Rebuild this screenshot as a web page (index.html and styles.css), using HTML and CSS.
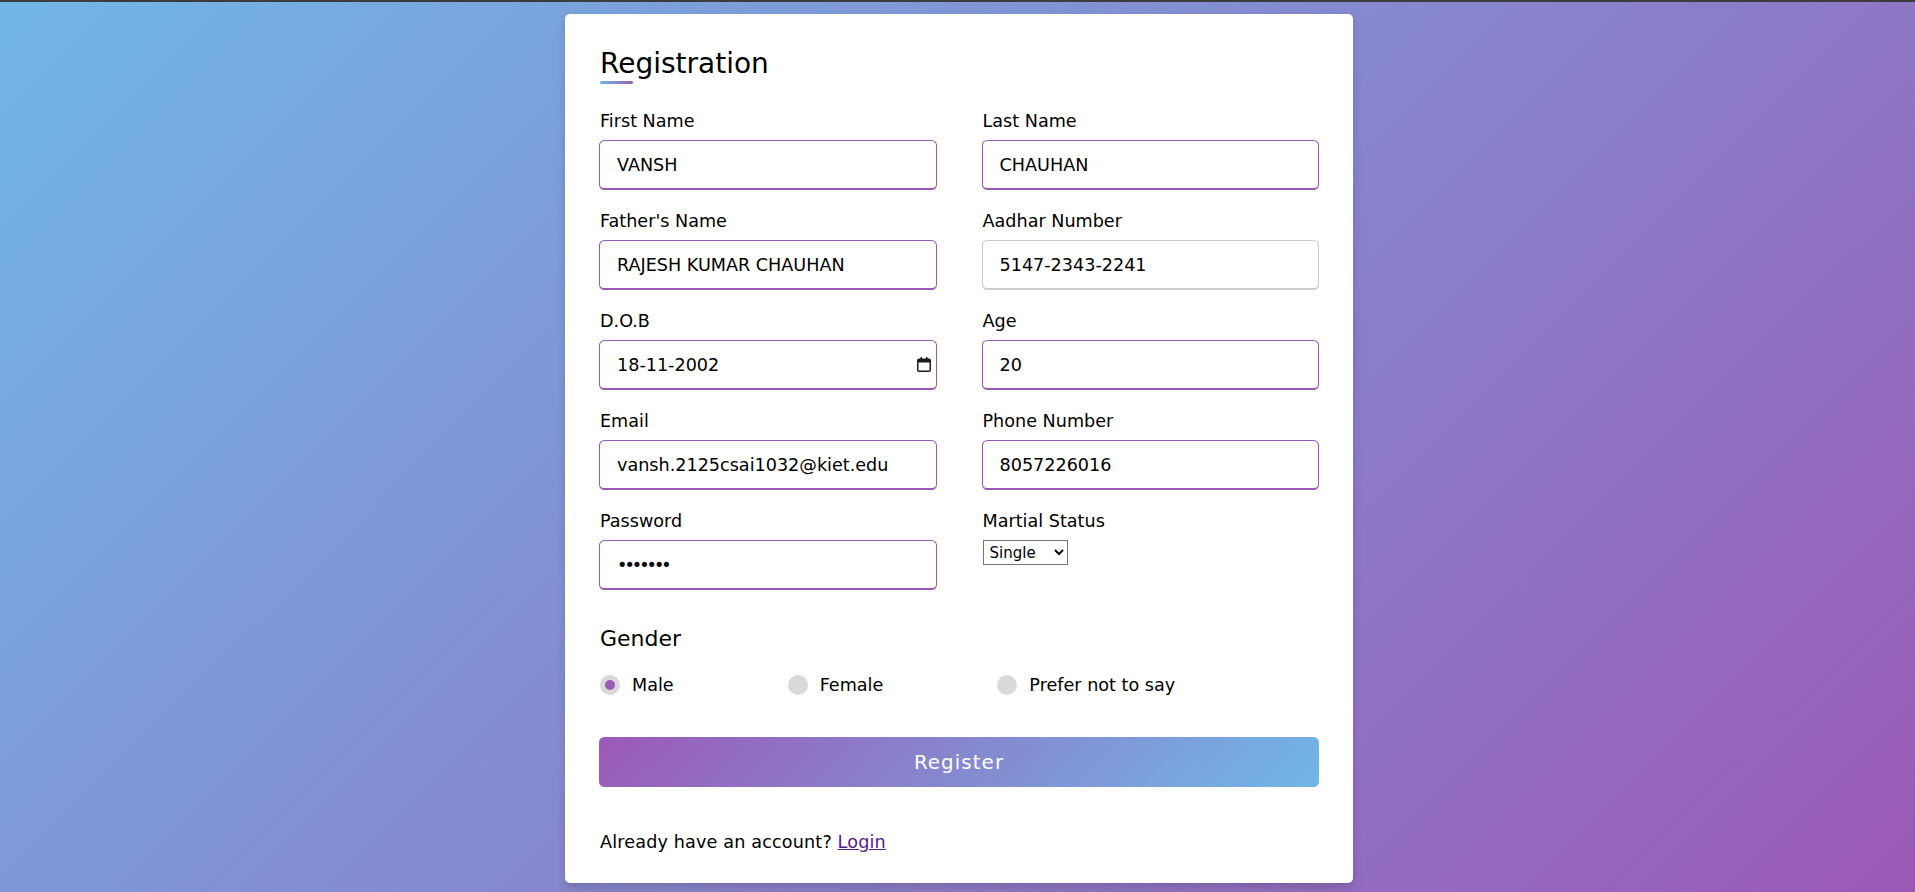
FILE: index.html
```html
<!DOCTYPE html>
<html lang="en">
<head>
<meta charset="utf-8">
<title>Registration</title>
<link rel="stylesheet" href="styles.css">
</head>
<body>
<div class="topbar"></div>
<div class="page">
  <div class="card">
    <div class="title">Registration</div>
    <form class="form" action="#">
      <div class="details">
        <div class="input-box">
          <label class="label">First Name</label>
          <input class="field" type="text" value="VANSH">
        </div>
        <div class="input-box">
          <label class="label">Last Name</label>
          <input class="field" type="text" value="CHAUHAN">
        </div>
        <div class="input-box">
          <label class="label">Father's Name</label>
          <input class="field" type="text" value="RAJESH KUMAR CHAUHAN">
        </div>
        <div class="input-box">
          <label class="label">Aadhar Number</label>
          <input class="field field-plain" type="text" value="5147-2343-2241">
        </div>
        <div class="input-box">
          <label class="label">D.O.B</label>
          <div class="date-wrap">
            <input class="field" type="text" value="18-11-2002">
            <svg class="cal-icon" viewBox="0 0 14 15" width="14" height="15" aria-hidden="true">
              <path fill="#1b1b1b" fill-rule="evenodd" d="M3.5 0h1.5v1.5h4V0h1.5v1.5h1.5A2 2 0 0 1 14 3.5v9.5a2 2 0 0 1-2 2H2a2 2 0 0 1-2-2V3.5a2 2 0 0 1 2-2h1.5z M1.5 5.5v7.5a.5.5 0 0 0 .5.5h10a.5.5 0 0 0 .5-.5V5.5z"/>
            </svg>
          </div>
        </div>
        <div class="input-box">
          <label class="label">Age</label>
          <input class="field" type="text" value="20">
        </div>
        <div class="input-box">
          <label class="label">Email</label>
          <input class="field" type="text" value="vansh.2125csai1032@kiet.edu">
        </div>
        <div class="input-box">
          <label class="label">Phone Number</label>
          <input class="field" type="text" value="8057226016">
        </div>
        <div class="input-box">
          <label class="label">Password</label>
          <input class="field field-pass" type="password" value="1234567">
        </div>
        <div class="input-box">
          <label class="label">Martial Status</label>
          <select class="status">
            <option>Single</option>
            <option>Married</option>
          </select>
        </div>
      </div>

      <div class="gender">
        <div class="gender-title">Gender</div>
        <div class="category">
          <label class="option"><span class="dot dot-on"></span><span class="option-text">Male</span></label>
          <label class="option"><span class="dot"></span><span class="option-text">Female</span></label>
          <label class="option"><span class="dot"></span><span class="option-text">Prefer not to say</span></label>
        </div>
      </div>

      <button class="register" type="button">Register</button>

      <p class="login">Already have an account? <a class="login-link" href="#">Login</a></p>
    </form>
  </div>
</div>
</body>
</html>
```

FILE: styles.css
```css
* {
  box-sizing: border-box;
}

html, body {
  margin: 0;
  padding: 0;
}

body {
  font-family: "DejaVu Sans", "Liberation Sans", sans-serif;
  color: #000;
}

.topbar {
  height: 2px;
  background: #3c3c3c;
}

.page {
  min-height: calc(100vh - 2px);
  background: linear-gradient(135deg, #71b7e6, #9b59b6);
  display: flex;
  justify-content: center;
  align-items: flex-start;
  padding: 12px 0 0 3px;
}

.card {
  width: 788px;
  background: #fff;
  border-radius: 5px;
  box-shadow: 0 5px 10px rgba(0, 0, 0, 0.15);
  padding: 33px 34px 29px 34px;
}

.title {
  font-size: 28px;
  line-height: 34px;
  font-weight: 500;
  padding-left: 1px;
}

.title::after {
  content: "";
  display: block;
  width: 33px;
  height: 3px;
  border-radius: 5px;
  background: linear-gradient(135deg, #71b7e6, #9b59b6);
}

.form {
  margin: 25px 0 0;
}

.details {
  display: grid;
  grid-template-columns: 1fr 1fr;
  column-gap: 45px;
  row-gap: 19px;
}

.label {
  display: block;
  font-size: 17.6px;
  line-height: 24px;
  font-weight: 500;
  margin-bottom: 7px;
  padding-left: 1px;
}

.field {
  display: block;
  width: 100%;
  height: 50px;
  margin: 0;
  outline: none;
  font-family: "DejaVu Sans", "Liberation Sans", sans-serif;
  font-size: 17.6px;
  color: #000;
  background: #fff;
  border-radius: 5.5px;
  padding: 0 0 0 17px;
  border: 1px solid #9b59b6;
  border-bottom-width: 2px;
}

.field-plain {
  border-color: #ccc;
}

.field-pass {
  letter-spacing: -3px;
}

.date-wrap {
  position: relative;
}

.cal-icon {
  position: absolute;
  right: 6px;
  top: 17px;
}

.status {
  display: block;
  width: 85px;
  height: 25px;
  margin-top: 4px;
  margin-left: 1px;
  font-family: "DejaVu Sans", "Liberation Sans", sans-serif;
  font-size: 15px;
  color: #000;
  background: #fff;
  border: 1px solid #767676;
  border-radius: 0;
  padding: 0 0 0 2px;
}

.gender {
  margin-top: 36px;
  padding-left: 1px;
}

.gender-title {
  font-size: 22px;
  line-height: 26px;
  font-weight: 500;
}

.category {
  width: 80%;
  margin-top: 21px;
  display: flex;
  justify-content: space-between;
}

.option {
  display: flex;
  align-items: center;
  height: 24px;
  font-size: 17.6px;
  line-height: 24px;
}

.dot {
  width: 20px;
  height: 20px;
  border-radius: 50%;
  background: #d9d9d9;
  border: 5.5px solid transparent;
  margin-right: 12px;
  flex: none;
}

.dot-on {
  border-color: #d9d9d9;
  background: #9b59b6;
}

.register {
  display: block;
  width: 100%;
  height: 50px;
  margin-top: 40px;
  border: none;
  border-radius: 5.5px;
  color: #fff;
  font-family: "DejaVu Sans", "Liberation Sans", sans-serif;
  font-size: 19.8px;
  font-weight: 500;
  letter-spacing: 1.1px;
  background: linear-gradient(135deg, #9b59b6, #71b7e6);
  cursor: pointer;
}

.login {
  margin: 43px 0 0;
  padding-left: 1px;
  font-size: 17.6px;
  line-height: 24px;
  letter-spacing: 0.15px;
}

.login-link {
  color: #551a8b;
}
```
